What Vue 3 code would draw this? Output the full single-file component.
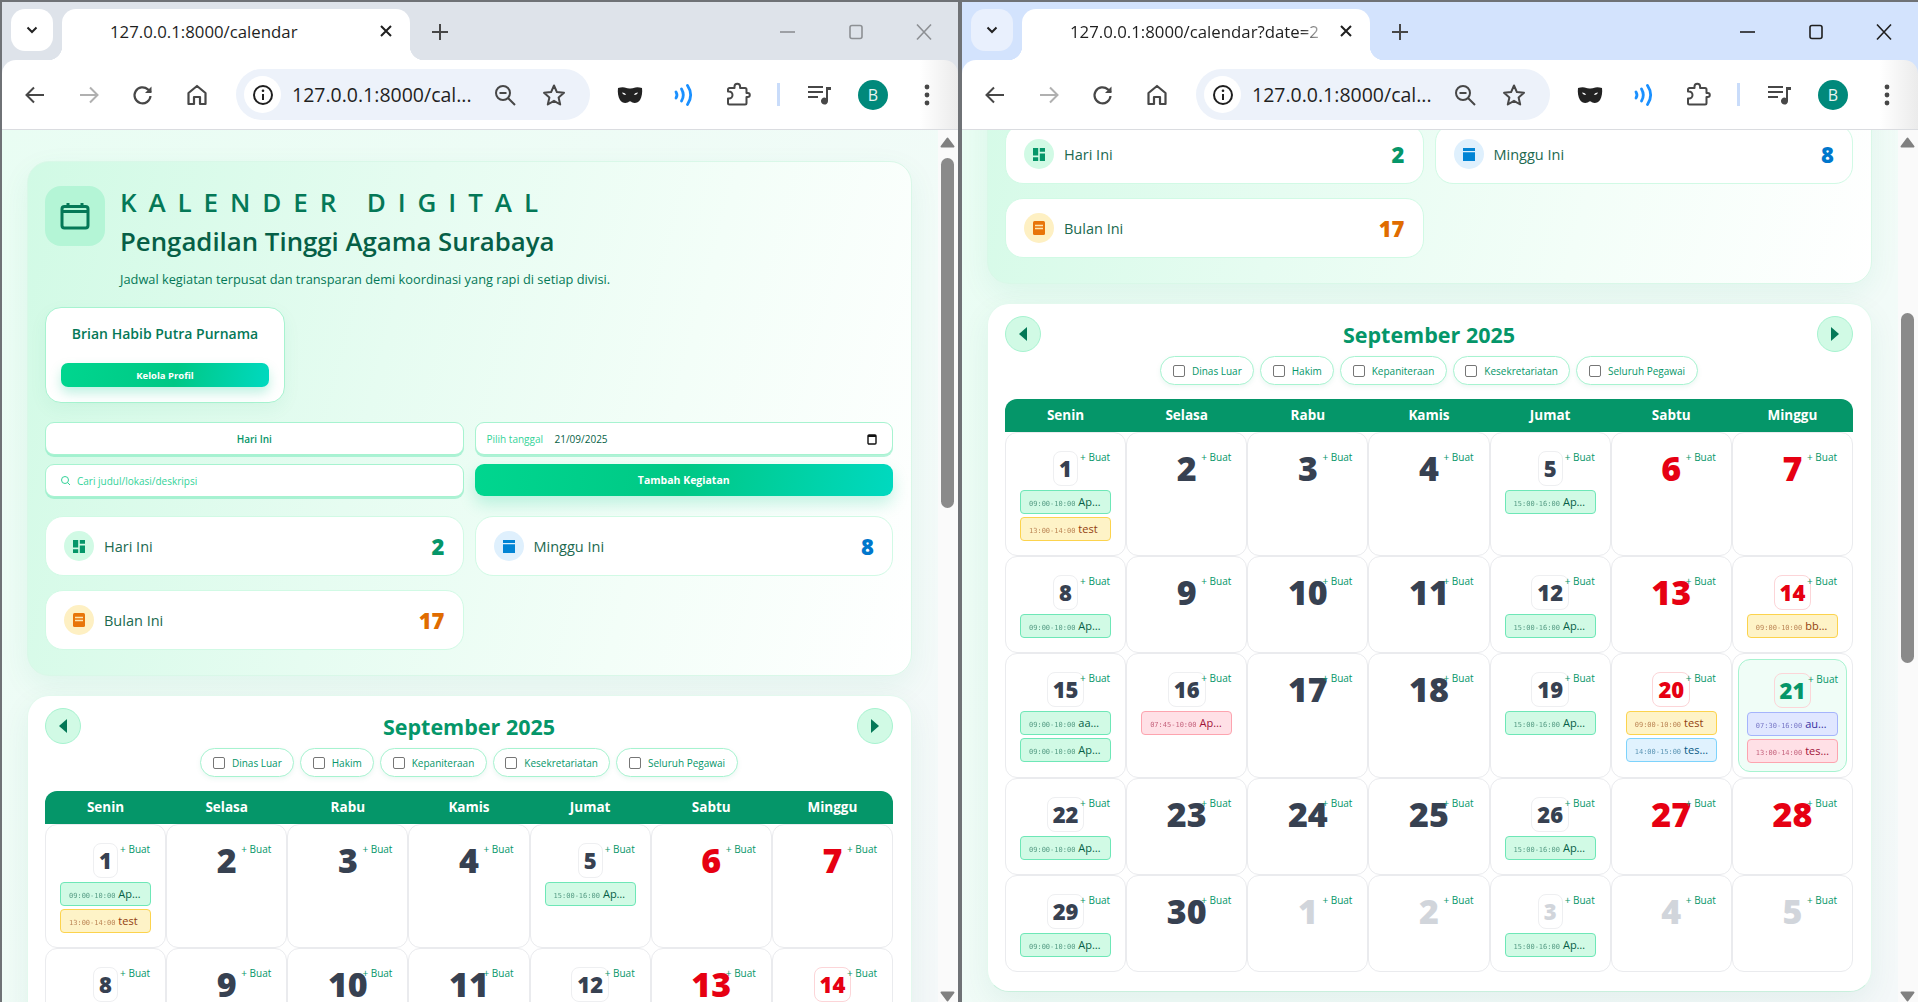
<template>
  <div class="desktop">
    <section v-for="(win, i) in windows" :key="i" class="window" :class="{ focused: win.focused }">
      <!-- tab strip -->
      <div class="strip">
        <button class="tab-search">
          <svg width="14" height="14" viewBox="0 0 14 14"><path d="M2.5 4.5 7 9l4.5-4.5" fill="none" stroke="#222" stroke-width="2" /></svg>
        </button>
        <div class="tab">
          <span class="tab-title">{{ win.title }}</span>
          <svg class="tab-close" width="14" height="14" viewBox="0 0 14 14"><path d="M2 2l10 10M12 2 2 12" stroke="#1f1f1f" stroke-width="2" /></svg>
        </div>
        <svg class="tab-new" width="18" height="18" viewBox="0 0 18 18"><path d="M9 1v16M1 9h16" stroke="#474747" stroke-width="2" /></svg>
        <div class="win-ctrls">
          <svg width="18" height="18" viewBox="0 0 18 18"><path d="M1 9h15" stroke="currentColor" stroke-width="1.6" /></svg>
          <svg width="18" height="18" viewBox="0 0 18 18"><rect x="3" y="2.5" width="12" height="13" rx="2" fill="none" stroke="currentColor" stroke-width="1.6" /></svg>
          <svg width="18" height="18" viewBox="0 0 18 18"><path d="M2 1.5l14 15M16 1.5l-14 15" stroke="currentColor" stroke-width="1.6" /></svg>
        </div>
      </div>

      <!-- toolbar -->
      <div class="toolbar">
        <span class="slot"><svg width="24" height="24" viewBox="0 0 24 24"><path d="M21 12H4M11 4.5 3.5 12l7.5 7.5" fill="none" stroke="#474747" stroke-width="2" /></svg></span>
        <span class="slot"><svg width="24" height="24" viewBox="0 0 24 24"><path d="M3 12h17M13 4.5l7.500 7.500-7.500 7.500" fill="none" stroke="#b0b0b0" stroke-width="2" /></svg></span>
        <span class="slot"><svg width="24" height="24" viewBox="0 0 24 24"><path d="M19.500 13a8 8 0 1 1-2.600-6.600L20 9" fill="none" stroke="#474747" stroke-width="2.200" /><path d="M20.500 3.500V10H14z" fill="#474747" /></svg></span>
        <span class="slot"><svg width="24" height="24" viewBox="0 0 24 24"><path d="M12 3 3.500 10v11H9v-7h6v7h5.500V10z" fill="none" stroke="#474747" stroke-width="2.200" stroke-linejoin="round" /></svg></span>

        <div class="omnibox">
          <span class="info">
            <svg width="22" height="22" viewBox="0 0 22 22"><circle cx="11" cy="11" r="9" fill="none" stroke="#1f1f1f" stroke-width="2" /><path d="M11 10v6" stroke="#1f1f1f" stroke-width="2" /><circle cx="11" cy="6.800" r="1.300" fill="#1f1f1f" /></svg>
          </span>
          <span class="url">127.0.0.1:8000/cal...</span>
          <svg class="zoom-icon" width="24" height="24" viewBox="0 0 24 24"><circle cx="10" cy="10" r="7" fill="none" stroke="#474747" stroke-width="2" /><path d="M15 15l7 7M6.500 10h7" stroke="#474747" stroke-width="2" /></svg>
          <svg class="star-icon" width="24" height="24" viewBox="0 0 24 24"><path d="M12 2.500l2.900 6.600 7.100.7-5.400 4.700 1.600 7-6.200-3.700-6.200 3.700 1.600-7L2 9.800l7.100-.7z" fill="none" stroke="#474747" stroke-width="2" stroke-linejoin="round" /></svg>
        </div>

        <span class="slot first-ext">
          <svg width="26" height="18" viewBox="0 0 26 18"><path d="M1 2c3.500-1 6-1 8.500 0 1.500.6 5.500.6 7 0C19 1 21.500 1 25 2c.6 4-.2 9-2 12-1.600 2.600-5 3.500-7.500 2.500-1-.5-1.500-1.300-2.500-1.300s-1.500.8-2.500 1.300C8 17.500 4.600 16.600 3 14 1.200 11 .4 6 1 2z" fill="#222" /><path d="M5 6.500c1.500 0 3.200.7 4.200 2.200-1.900.4-3.500-.5-4.200-2.200zM21 6.500c-1.500 0-3.200.7-4.200 2.200 1.900.4 3.500-.5 4.200-2.200z" fill="#fff" /></svg>
        </span>
        <span class="slot">
          <svg width="22" height="24" viewBox="0 0 22 24"><g fill="none" stroke="#1a90ff" stroke-width="2.800" stroke-linecap="round"><path d="M3 9c1.300 2 1.300 4 0 6" /><path d="M8.500 6c2.400 4 2.400 8 0 12" /><path d="M14.500 2.500c4 6 4 13 0 19" /></g></svg>
        </span>
        <span class="slot">
          <svg width="26" height="26" viewBox="0 0 26 26"><path d="M4.500 6H9.500V4.500a2.800 2.800 0 0 1 5.600 0V6H20a1.500 1.500 0 0 1 1.500 1.500V11h1.300a2 2 0 0 1 0 4h-1.300v6a1.500 1.500 0 0 1-1.500 1.500H4.500A1.500 1.500 0 0 1 3 21v-4.500h1a3.500 3.500 0 0 0 0-7H3v-2A1.500 1.500 0 0 1 4.500 6z" fill="none" stroke="#474747" stroke-width="2" stroke-linejoin="round" /></svg>
        </span>
        <span class="bar-sep"><i></i></span>
        <span class="slot music">
          <svg width="26" height="20" viewBox="0 0 26 20"><path d="M2 2h15M2 7h15M2 12h10" stroke="#474747" stroke-width="2" /><path d="M20 2h5v3h-3v11a3.500 3.500 0 1 1-2-3.100z" fill="#474747" /></svg>
        </span>
        <span class="slot"><span class="avatar">B</span></span>
        <span class="slot"><svg width="6" height="24" viewBox="0 0 6 24"><circle cx="3" cy="4" r="2.400" fill="#474747" /><circle cx="3" cy="12" r="2.400" fill="#474747" /><circle cx="3" cy="20" r="2.400" fill="#474747" /></svg></span>
      </div>

      <!-- page -->
      <div class="viewport">
        <div :ref="el => (pageEls[i] = el)" class="page">
          <header class="hero">
            <div class="hero-head">
              <div class="hero-icon">
                <svg width="30" height="28" viewBox="0 0 30 28"><rect x="2" y="4.500" width="26" height="21.500" rx="2.500" fill="none" stroke="#047857" stroke-width="3" /><path d="M2 9.500h26M8 1v5M22 1v5" stroke="#047857" stroke-width="3" /></svg>
              </div>
              <div>
                <div class="kicker">KALENDER DIGITAL</div>
                <h1>Pengadilan Tinggi Agama Surabaya</h1>
                <p>Jadwal kegiatan terpusat dan transparan demi koordinasi yang rapi di setiap divisi.</p>
              </div>
            </div>

            <div class="profile">
              <div class="profile-name">Brian Habib Putra Purnama</div>
              <button class="profile-btn">Kelola Profil</button>
            </div>

            <div class="controls">
              <button class="ctl ctl-today">Hari Ini</button>
              <div class="ctl ctl-date">
                <span class="date-label">Pilih tanggal</span>
                <span class="date-value">21/09/2025</span>
                <svg width="12" height="12" viewBox="0 0 12 12"><rect x="2" y="2" width="8" height="9" rx="1" fill="none" stroke="#111" stroke-width="1.400" /><path d="M2 3h8" stroke="#111" stroke-width="2" /></svg>
              </div>
              <div class="ctl ctl-search">
                <svg width="11" height="11" viewBox="0 0 11 11"><circle cx="5" cy="5" r="3.500" fill="none" stroke="#34d399" /><path d="M7.500 7.500 10 10" stroke="#34d399" /></svg>
                <input placeholder="Cari judul/lokasi/deskripsi" />
              </div>
              <button class="ctl-add">Tambah Kegiatan</button>
            </div>

            <div class="stats">
              <div v-for="stat in stats" :key="stat.label" class="stat">
                <span class="stat-icon" :class="stat.tone">
                  <svg v-if="stat.tone === 'green'" width="12" height="13" viewBox="0 0 12 13"><path d="M0 0h5.200v7.500H0zM6.800 0H12v3.800H6.800zM6.800 5.400H12V13H6.800zM0 9.200h5.200V13H0z" fill="#059669" /></svg>
                  <svg v-else-if="stat.tone === 'blue'" width="12" height="13" viewBox="0 0 12 13"><path d="M0 0h12v3H0zM0 4.200h12V13H0z" fill="#0284d4" /></svg>
                  <svg v-else width="12" height="14" viewBox="0 0 12 14"><rect width="12" height="14" rx="1.500" fill="#e8750a" /><path d="M2 4.500h8M2 7.500h8" stroke="#fde6b0" stroke-width="1.400" /></svg>
                </span>
                <span class="stat-label">{{ stat.label }}</span>
                <strong class="stat-num" :class="stat.tone">{{ stat.value }}</strong>
              </div>
            </div>
          </header>

          <section class="cal">
            <div class="cal-top">
              <button class="nav-btn"><svg width="10" height="14" viewBox="0 0 10 14"><path d="M9 0v14L1 7z" fill="#047857" /></svg></button>
              <h2>September 2025</h2>
              <button class="nav-btn"><svg width="10" height="14" viewBox="0 0 10 14"><path d="M1 0v14l8-7z" fill="#047857" /></svg></button>
            </div>
            <div class="chips">
              <label v-for="chip in chips" :key="chip" class="chip"><input type="checkbox" />{{ chip }}</label>
            </div>
            <div class="cal-head">
              <div v-for="d in dayNames" :key="d">{{ d }}</div>
            </div>
            <div class="cal-grid">
              <div v-for="(cell, n) in cells" :key="n" class="cell">
                <div class="cell-inner" :class="{ today: cell.today }">
                  <span class="buat">+ Buat</span>
                  <div class="num-row">
                    <span class="num" :class="[cell.kind, { boxed: cell.events.length }]">{{ cell.day }}</span>
                  </div>
                  <div v-for="(ev, k) in cell.events" :key="k" class="event" :class="ev.tone">
                    <span class="ev-time">{{ ev.time }}</span>
                    <span class="ev-title">{{ ev.title }}</span>
                  </div>
                </div>
              </div>
            </div>
          </section>
        </div>

        <div class="scrollbar">
          <svg class="sb-up" width="15" height="11" viewBox="0 0 15 11"><path d="M7.500 1.500 13.500 9.500H1.500z" fill="#808080" stroke="#808080" stroke-width="2" stroke-linejoin="round" /></svg>
          <div class="sb-thumb" :style="{ marginTop: win.thumbOffset + 'px' }"></div>
          <svg class="sb-down" width="15" height="11" viewBox="0 0 15 11"><path d="M7.500 9.500 13.500 1.500H1.500z" fill="#808080" stroke="#808080" stroke-width="2" stroke-linejoin="round" /></svg>
        </div>
      </div>
    </section>
  </div>
</template>

<script setup>
import { onMounted } from 'vue'

const windows = [
  { title: '127.0.0.1:8000/calendar', focused: false, scroll: 0, thumbOffset: 10 },
  { title: '127.0.0.1:8000/calendar?date=2', focused: true, scroll: 392, thumbOffset: 165 },
]

const pageEls = []

onMounted(() => {
  windows.forEach((w, i) => {
    pageEls[i].scrollTop = w.scroll
  })
})

const stats = [
  { label: 'Hari Ini', value: 2, tone: 'green' },
  { label: 'Minggu Ini', value: 8, tone: 'blue' },
  { label: 'Bulan Ini', value: 17, tone: 'amber' },
]

const chips = ['Dinas Luar', 'Hakim', 'Kepaniteraan', 'Kesekretariatan', 'Seluruh Pegawai']
const dayNames = ['Senin', 'Selasa', 'Rabu', 'Kamis', 'Jumat', 'Sabtu', 'Minggu']

const ev = (tone, time, title) => ({ tone, time, title })
const morning = ev('green', '09:00-10:00', 'Ap…')
const afternoon = ev('green', '15:00-16:00', 'Ap…')

const eventsByDay = {
  1: [morning, ev('yellow', '13:00-14:00', 'test')],
  5: [afternoon],
  8: [morning],
  12: [afternoon],
  14: [ev('yellow', '09:00-10:00', 'bb…')],
  15: [ev('green', '09:00-10:00', 'aa…'), morning],
  16: [ev('red', '07:45-10:00', 'Ap…')],
  19: [afternoon],
  20: [ev('yellow', '09:00-10:00', 'test'), ev('blue', '14:00-15:00', 'tes…')],
  21: [ev('purple', '07:30-16:00', 'au…'), ev('red', '13:00-14:00', 'tes…')],
  22: [morning],
  26: [afternoon],
  29: [morning],
}

const cells = []
for (let day = 1; day <= 30; day++) {
  const weekday = (day - 1) % 7
  cells.push({
    day,
    kind: weekday >= 5 ? 'weekend' : '',
    today: day === 21,
    events: eventsByDay[day] || [],
  })
}
// days of next month
for (let day = 1; day <= 5; day++) {
  cells.push({ day, kind: 'muted', today: false, events: day === 3 ? [afternoon] : [] })
}
</script>

<style>
html,
body {
  margin: 0;
  overflow: hidden;
}
</style>

<style scoped>
.desktop {
  display: flex;
  width: 1918px;
  height: 1002px;
  font-family: 'Open Sans', 'Noto Sans', sans-serif;
  background: #6f7276;
}
.window {
  display: flex;
  flex-direction: column;
  width: 960px;
  height: 1002px;
  box-sizing: border-box;
  border: solid #6f7276;
  border-width: 2px 2px 0;
  background: #dee3ea;
  overflow: hidden;
}
.window.focused {
  width: 958px;
  border-right-width: 0;
  background: #d3e3fd;
}

/* browser chrome */
.strip {
  display: flex;
  align-items: flex-start;
  height: 58px;
  flex: none;
}
.tab-search {
  display: flex;
  align-items: center;
  justify-content: center;
  width: 42px;
  height: 42px;
  margin: 7px 0 0 9px;
  padding: 0;
  border: 0;
  border-radius: 14px;
  background: #fff;
}
.focused .tab-search {
  background: #e9f0fd;
}
.tab {
  position: relative;
  display: flex;
  align-items: center;
  width: 348px;
  height: 51px;
  margin: 7px 0 0 9px;
  box-sizing: border-box;
  padding: 0 17px 7px 48px;
  border-radius: 14px 14px 0 0;
  background: #fff;
}
.tab::before,
.tab::after {
  content: '';
  position: absolute;
  bottom: 0;
  width: 14px;
  height: 14px;
}
.tab::before {
  left: -14px;
  background: radial-gradient(circle at 0 0, transparent 14px, #fff 14.5px);
}
.tab::after {
  right: -14px;
  background: radial-gradient(circle at 100% 0, transparent 14px, #fff 14.5px);
}
.tab-title {
  flex: 1;
  overflow: hidden;
  white-space: nowrap;
  font-size: 16.800px;
  color: #1f1f1f;
}
.focused .tab-title {
  -webkit-mask-image: linear-gradient(90deg, #000 88%, transparent);
  mask-image: linear-gradient(90deg, #000 88%, transparent);
}
.tab-close {
  margin-left: 8px;
  flex: none;
}
.tab-new {
  margin: 21px 0 0 21px;
}
.win-ctrls {
  display: flex;
  gap: 50px;
  margin: 21px 25px 0 auto;
  color: #8d9094;
}
.focused .win-ctrls {
  color: #1f1f1f;
}
.toolbar {
  position: relative;
  display: flex;
  align-items: center;
  flex: none;
  height: 69px;
  padding-left: 6px;
  border-bottom: 1px solid #dadce0;
  border-radius: 14px 14px 0 0;
  background: linear-gradient(90deg, #fff 96%, #ebebeb);
}
.slot {
  display: flex;
  align-items: center;
  justify-content: center;
  flex: none;
  width: 54px;
}
.first-ext {
  margin-left: 13px;
}
.music {
  width: 55px;
}
.omnibox {
  display: flex;
  align-items: center;
  flex: none;
  width: 354px;
  height: 51px;
  margin-left: 12px;
  box-sizing: border-box;
  padding-left: 8px;
  border-radius: 26px;
  background: #edf2fa;
}
.info {
  display: flex;
  align-items: center;
  justify-content: center;
  width: 37px;
  height: 37px;
  border-radius: 50%;
  background: #fff;
}
.url {
  width: 199px;
  margin-left: 11px;
  font-size: 19.500px;
  color: #1f1f1f;
  white-space: nowrap;
}
.zoom-icon {
  margin-left: 2px;
}
.star-icon {
  margin-left: 25px;
}
.bar-sep {
  display: flex;
  justify-content: center;
  width: 26px;
  flex: none;
}
.bar-sep i {
  display: block;
  width: 3px;
  height: 23px;
  background: #c9dcfa;
}
.avatar {
  display: flex;
  align-items: center;
  justify-content: center;
  width: 30px;
  height: 30px;
  border-radius: 50%;
  background: #00897b;
  color: #e8f5f2;
  font-size: 16px;
}

/* scroll area */
.viewport {
  display: flex;
  flex: 1;
  min-height: 0;
  background: #fafafa;
}
.page {
  flex: 1;
  min-width: 0;
  overflow: hidden;
  box-sizing: border-box;
  padding: 31px 26px 40px 25px;
  background: linear-gradient(135deg, #e9fdf3 0%, #f2fbf8 60%, #f4f8f9 100%);
}
.scrollbar {
  display: flex;
  flex-direction: column;
  flex: none;
  width: 20px;
  padding: 7px 0 0 2px;
  box-sizing: border-box;
}
.sb-up,
.sb-down {
  flex: none;
}
.sb-thumb {
  flex: none;
  width: 13px;
  height: 350px;
  margin-left: 1px;
  border-radius: 7px;
  background: #8a8a8a;
}
.sb-down {
  margin-top: auto;
  margin-bottom: 0;
}

/* hero */
.hero {
  padding: 24px 18px 25px 17px;
  border: 1px solid #d9f8e8;
  border-radius: 22px;
  background: linear-gradient(105deg, #d1fae5 0%, #e6fcf1 40%, #f3fef8 70%, #ffffff 100%);
  box-shadow: 0 10px 30px rgba(5, 150, 105, 0.07);
}
.hero-head {
  display: flex;
  gap: 15px;
}
.hero-icon {
  display: flex;
  align-items: center;
  justify-content: center;
  flex: none;
  width: 60px;
  height: 60px;
  border-radius: 16px;
  background: #b4f5d6;
}
.kicker {
  font-size: 26px;
  line-height: 33px;
  font-weight: 600;
  letter-spacing: 11.900px;
  color: #047857;
}
h1 {
  margin: 4px 0 0;
  font-size: 25.800px;
  line-height: 36px;
  font-weight: 600;
  color: #065f46;
}
.hero-head p {
  margin: 10px 0 0;
  font-size: 12.800px;
  line-height: 20px;
  color: #047857;
}
.profile {
  width: 240px;
  margin-top: 18px;
  box-sizing: border-box;
  padding: 15px 15px 15px;
  border: 1px solid #a7f3d0;
  border-radius: 16px;
  background: #fff;
  box-shadow: 0 6px 18px rgba(5, 150, 105, 0.06);
}
.profile-name {
  font-size: 14px;
  line-height: 22px;
  font-weight: 600;
  text-align: center;
  color: #047857;
  white-space: nowrap;
}
.profile-btn {
  display: block;
  width: 100%;
  height: 24px;
  margin-top: 18px;
  padding: 0;
  border: 0;
  border-radius: 7px;
  background: linear-gradient(100deg, #00d68f 0%, #00c885 55%, #00d9c0 100%);
  box-shadow: 0 6px 12px rgba(0, 200, 140, 0.25);
  color: #fff;
  font: 700 9.500px 'Open Sans', sans-serif;
}
.controls {
  display: grid;
  grid-template-columns: 1fr 1fr;
  gap: 9px 11px;
  margin-top: 19px;
}
.ctl {
  display: flex;
  align-items: center;
  height: 33px;
  box-sizing: border-box;
  border: 1.500px solid #a7f3d0;
  border-radius: 9px;
  background: #fff;
  box-shadow: 0 2px 0 rgba(110, 231, 183, 0.5);
}
.ctl-today {
  justify-content: center;
  padding: 0;
  font: 600 10px 'Open Sans', sans-serif;
  color: #059669;
}
.ctl-date {
  padding: 0 14px 0 11px;
  font-size: 10px;
}
.date-label {
  width: 68px;
  color: #34d399;
}
.date-value {
  flex: 1;
  color: #065f46;
}
.ctl-search {
  gap: 6px;
  padding: 0 11px 0 14px;
}
.ctl-search input {
  flex: 1;
  min-width: 0;
  padding: 0;
  border: 0;
  outline: none;
  background: transparent;
  font: 400 10px 'Open Sans', sans-serif;
}
.ctl-search input::placeholder {
  color: #34d399;
  opacity: 1;
}
.ctl-add {
  height: 32px;
  padding: 0;
  border: 0;
  border-radius: 9px;
  background: linear-gradient(100deg, #00d68f 0%, #00c885 50%, #00d9c0 100%);
  box-shadow: 0 8px 16px rgba(0, 200, 140, 0.22);
  color: #fff;
  font: 700 10.500px 'Open Sans', sans-serif;
}
.stats {
  display: grid;
  grid-template-columns: 1fr 1fr;
  gap: 14px 11px;
  margin-top: 19px;
}
.stat {
  display: flex;
  align-items: center;
  height: 60px;
  box-sizing: border-box;
  padding: 0 18px 0 18px;
  border: 1px solid #d1fae5;
  border-radius: 18px;
  background: #fff;
}
.stat-icon {
  display: flex;
  align-items: center;
  justify-content: center;
  width: 30px;
  height: 30px;
  flex: none;
  border-radius: 50%;
}
.stat-icon.green {
  background: #d1fae5;
}
.stat-icon.blue {
  background: #dff0fd;
}
.stat-icon.amber {
  background: #fef0c3;
}
.stat-label {
  flex: 1;
  margin-left: 10px;
  font-size: 14.500px;
  font-weight: 500;
  color: #20694f;
}
.stat-num {
  font-size: 22px;
  font-weight: 800;
}
.stat-num.green {
  color: #059669;
}
.stat-num.blue {
  color: #0077cc;
}
.stat-num.amber {
  color: #e06c00;
}

/* calendar */
.cal {
  margin-top: 19px;
  padding: 12px 18px 19px 17px;
  border: 1px solid #e3f9ee;
  border-bottom-color: #c9f0dd;
  border-radius: 22px;
  background: #fff;
  box-shadow: 0 10px 30px rgba(5, 120, 90, 0.07);
}
.cal-top {
  display: flex;
  align-items: center;
  justify-content: space-between;
}
.nav-btn {
  display: flex;
  align-items: center;
  justify-content: center;
  width: 36px;
  height: 36px;
  padding: 0;
  border: 1px solid #a7f3d0;
  border-radius: 50%;
  background: #d1fae5;
}
h2 {
  margin: 0;
  font-size: 21.500px;
  font-weight: 700;
  color: #059669;
}
.chips {
  display: flex;
  justify-content: center;
  gap: 6px;
  margin-top: 4px;
}
.chip {
  display: flex;
  align-items: center;
  gap: 7px;
  height: 29px;
  box-sizing: border-box;
  padding: 0 11.500px;
  border: 1.500px solid #a7f3d0;
  border-radius: 15px;
  background: #fff;
  box-shadow: 0 2px 5px rgba(5, 150, 105, 0.08);
  font-size: 10px;
  font-weight: 500;
  color: #059669;
  white-space: nowrap;
}
.chip input {
  appearance: none;
  width: 12px;
  height: 12px;
  margin: 0;
  border: 1px solid #767676;
  border-radius: 2px;
  background: #fff;
}
.cal-head {
  display: grid;
  grid-template-columns: repeat(7, 1fr);
  height: 33px;
  margin-top: 14px;
  border-radius: 12px 12px 0 0;
  background: #059669;
  color: #fff;
  font-size: 13.500px;
  font-weight: 700;
  line-height: 33px;
  text-align: center;
}
.cal-grid {
  display: grid;
  grid-template-columns: repeat(7, 1fr);
}
.cell {
  display: flex;
  box-sizing: border-box;
  min-width: 0;
  border: 1px solid #eaebee;
  border-radius: 12px;
  background: #fff;
}
.cell-inner {
  position: relative;
  flex: 1;
  min-width: 0;
  box-sizing: border-box;
  padding: 18px 14px 14px;
}
.cell-inner.today {
  margin: 5px;
  padding: 13px 8px 8px;
  border: 1.500px solid #a7f3d0;
  border-radius: 12px;
  background: #f0fdf7;
}
.buat {
  position: absolute;
  top: 18px;
  right: 15px;
  font-size: 10px;
  line-height: 13px;
  color: #059669;
  white-space: nowrap;
}
.today .buat {
  top: 13px;
  right: 8px;
}
.num-row {
  display: flex;
  justify-content: center;
  height: 35px;
  margin-bottom: 4px;
}
.num {
  font-family: 'Noto Sans', sans-serif;
  font-size: 34px;
  font-weight: 900;
  line-height: 35px;
  color: #374151;
}
.num.boxed {
  box-sizing: border-box;
  height: 35px;
  min-width: 24px;
  padding: 0 5px;
  border: 1px solid #eeeff1;
  border-radius: 8px;
  font-size: 22px;
  line-height: 33px;
  text-align: center;
  background: #fff;
}
.num.weekend {
  color: #e60012;
}
.num.weekend.boxed {
  border-color: #fcd5d8;
}
.num.muted {
  color: #d1d5db;
}
.today .num {
  color: #059669;
  border-color: #a7f3d0;
  background: #ecfdf5;
}
.event {
  display: flex;
  align-items: baseline;
  gap: 3px;
  height: 24px;
  box-sizing: border-box;
  margin-bottom: 3px;
  padding: 0 8px;
  border: 1px solid;
  border-radius: 4px;
  line-height: 21px;
  white-space: nowrap;
  overflow: hidden;
}
.event:last-child {
  margin-bottom: 0;
}
.ev-time {
  font: 7px 'DejaVu Sans Mono', monospace;
  opacity: 0.62;
}
.ev-title {
  font-size: 11px;
  font-weight: 500;
}
.event.green {
  background: #d1fae5;
  border-color: #6ee7b7;
  color: #065f46;
}
.event.yellow {
  background: #fef3c7;
  border-color: #fcd34d;
  color: #92400e;
}
.event.red {
  background: #ffe0e6;
  border-color: #fda4af;
  color: #9f1239;
}
.event.blue {
  background: #e0f2fe;
  border-color: #7dd3fc;
  color: #075985;
}
.event.purple {
  background: #e0e7ff;
  border-color: #a5b4fc;
  color: #3730a3;
}
</style>
